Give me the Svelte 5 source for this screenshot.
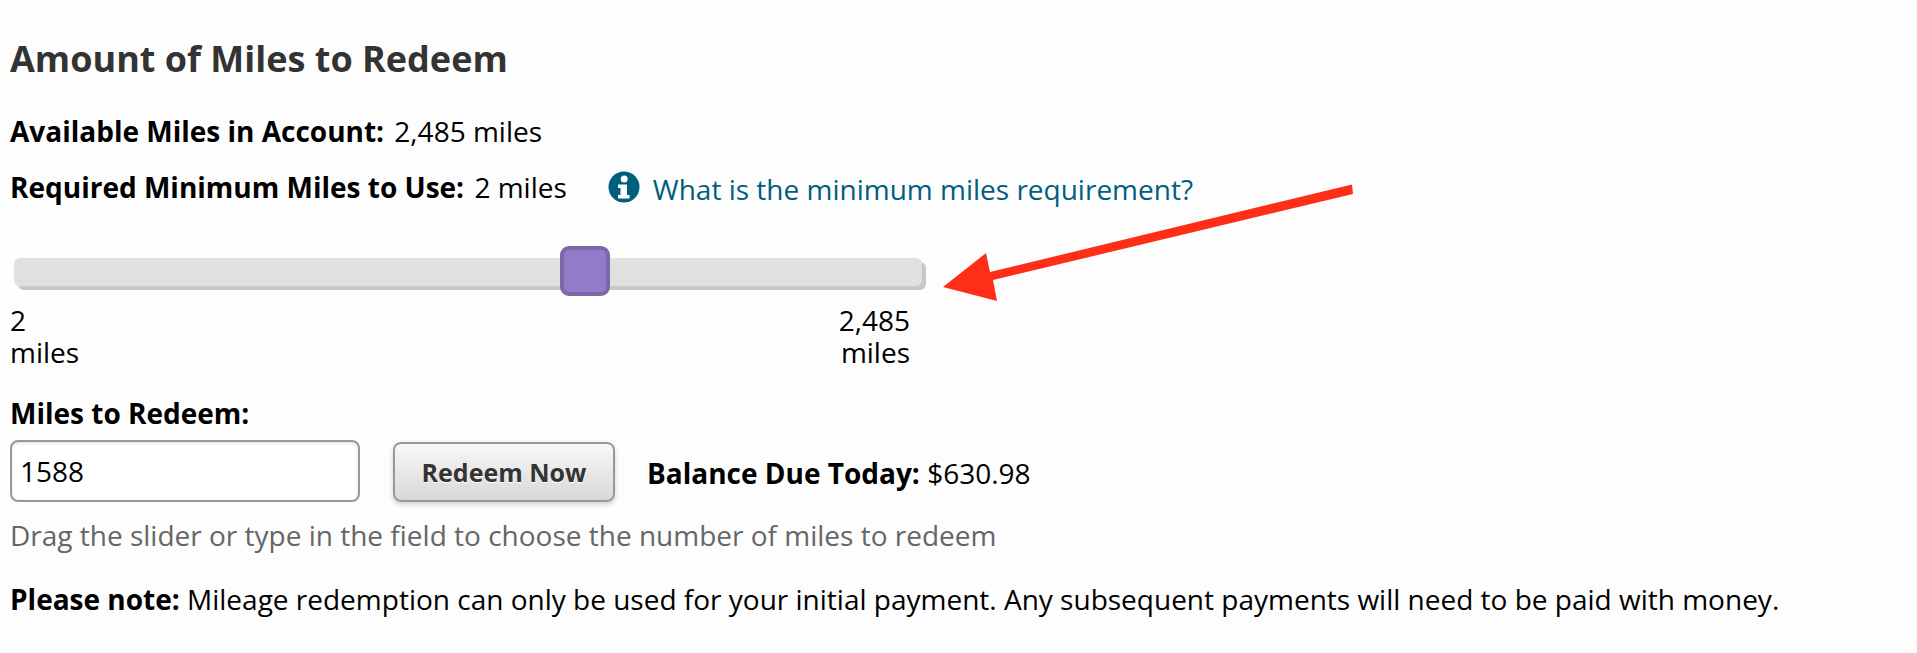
<script>
    const min = 2;
    const max = 2485;
    let miles = $state('1588');

    // handle travels over the track minus a little on each end
    let handleLeft = $derived(
        Math.min(Math.max((Number(miles) - min) / (max - min), 0), 1) * 855
    );
</script>

<div class="page">
    <h2>Amount of Miles to Redeem</h2>

    <p class="row available"><b>Available Miles in Account:</b> <span>2,485 miles</span></p>
    <div class="row required">
        <p><b>Required Minimum Miles to Use:</b> <span>2 miles</span></p>
        <a href="#info" class="info">
            <svg width="32" height="32" viewBox="0 0 32 32">
                <circle cx="16" cy="16" r="15.5" fill="#005e7f" />
                <circle cx="16.2" cy="8" r="3.5" fill="#fff" />
                <path d="M10 13.5h9v10.5h2.500v3.500h-11.500v-3.500h2.500v-7h-2.500z" fill="#fff" />
            </svg>
            <span>What is the minimum miles requirement?</span>
        </a>
    </div>

    <div class="slider">
        <div class="track"></div>
        <div class="handle" style="left: {handleLeft}px"></div>
    </div>
    <div class="scale">
        <div>2<br />miles</div>
        <div class="end">2,485<br />miles</div>
    </div>

    <label class="miles-label" for="miles">Miles to Redeem:</label>
    <div class="controls">
        <input id="miles" type="text" bind:value={miles} />
        <button type="button">Redeem Now</button>
        <p class="balance"><b>Balance Due Today:</b> <span>$630.98</span></p>
    </div>
    <p class="hint">Drag the slider or type in the field to choose the number of miles to redeem</p>
    <p class="note"><b>Please note:</b> Mileage redemption can only be used for your initial payment. Any subsequent payments will need to be paid with money.</p>

    <svg class="arrow" width="1917" height="653" viewBox="0 0 1917 653">
        <path d="M1352 184.500l1 9.500-360 86 4 21-54-14 43-34 4 19z" fill="#ff2f17" />
    </svg>
</div>

<style>
    :global(body) {
        margin: 0;
        background: #fdfdfd;
    }

    .page {
        position: relative;
        height: 653px;
        overflow: hidden;
        box-sizing: border-box;
        padding: 36px 0 0 10px;
        font-family: "Open Sans", "Noto Sans", sans-serif;
        font-size: 28px;
        line-height: 38px;
        color: #000;
    }

    h2 {
        margin: 0;
        font-size: 36px;
        line-height: 46px;
        font-weight: 700;
        color: #333;
    }

    p {
        margin: 0;
    }

    .row span {
        margin-left: 3px;
    }

    .available {
        margin-top: 30px;
    }

    .required {
        display: flex;
        align-items: flex-start;
        margin-top: 18px;
    }

    .info {
        display: flex;
        align-items: flex-start;
        margin-left: 41px;
        color: #005e7f;
        text-decoration: none;
    }

    .info svg {
        margin-top: 3px;
    }

    .info span {
        margin: 2px 0 0 13px;
    }

    .slider {
        position: relative;
        width: 912px;
        height: 50px;
        margin: 38px 0 0 4px;
    }

    .track {
        position: absolute;
        top: 12px;
        left: 0;
        width: 908px;
        height: 28px;
        background: #e0e0e0;
        border-radius: 6px;
        box-shadow: 4px 4px 0 #c8c8c8;
    }

    .handle {
        position: absolute;
        top: 0;
        width: 50px;
        height: 50px;
        box-sizing: border-box;
        background: #947bc9;
        border: 4px solid #7a68a9;
        border-radius: 9px;
    }

    .scale {
        display: flex;
        justify-content: space-between;
        width: 900px;
        margin-top: 8px;
        line-height: 32px;
    }

    .end {
        text-align: right;
    }

    .miles-label {
        display: block;
        margin-top: 26px;
        font-weight: 700;
    }

    .controls {
        display: flex;
        align-items: flex-end;
        margin-top: 8px;
    }

    input {
        width: 350px;
        height: 62px;
        box-sizing: border-box;
        padding: 0 8px;
        font-family: inherit;
        font-size: inherit;
        color: #000;
        background: #fff;
        border: 2px solid #999;
        border-radius: 8px;
        box-shadow: inset 0 1px 3px rgba(0, 0, 0, 0.15);
        outline: none;
    }

    button {
        width: 222px;
        height: 60px;
        margin-left: 33px;
        box-sizing: border-box;
        padding: 0;
        font-family: inherit;
        font-size: 25px;
        font-weight: 700;
        color: #333;
        text-shadow: 0 1px 0 #fff;
        background: linear-gradient(#f8f8f8, #d8d8d8);
        border: 2px solid #999;
        border-radius: 8px;
        box-shadow: 0 2px 5px rgba(0, 0, 0, 0.2);
    }

    .balance {
        margin: 0 0 10px 32px;
    }

    .hint {
        margin-top: 14px;
        color: #666;
    }

    .note {
        margin-top: 26px;
    }

    .arrow {
        position: absolute;
        top: 0;
        left: 0;
        pointer-events: none;
    }
</style>
